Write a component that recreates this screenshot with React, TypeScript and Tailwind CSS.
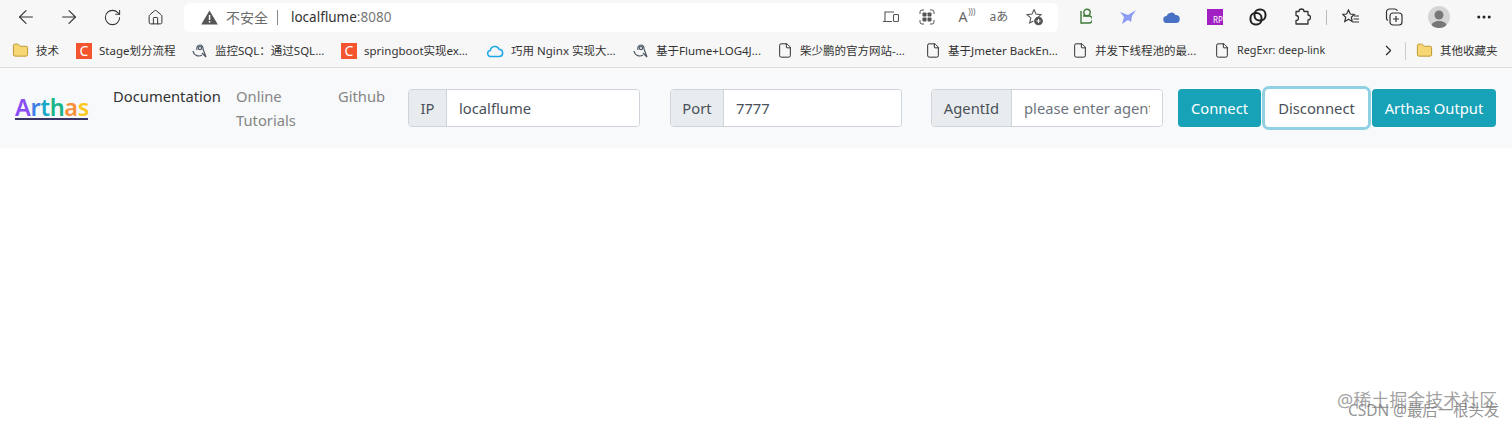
import { ArrowLeft, ArrowRight, ChevronRight, File, Folder, Home, MoreHorizontal, RotateCw } from "lucide-react";
import type { ReactNode } from "react";

const FONT = "font-['Noto_Sans','Open_Sans','Noto_Sans_CJK_SC',sans-serif]";

function Cell({ children, narrow }: { children: ReactNode; narrow?: boolean }) {
  return <div className={`flex h-full shrink-0 items-center justify-center ${narrow ? "w-9" : "w-[43.4px]"}`}>{children}</div>;
}

function CsdnIcon() {
  return (
    <div className="flex h-4 w-4 shrink-0 items-center justify-center bg-[#f4552f] text-[14px] leading-none text-white">C</div>
  );
}

function BirdIcon() {
  return (
    <svg width="16" height="16" viewBox="0 0 16 16" fill="none" stroke="#4b5563" strokeWidth="1.2" className="shrink-0">
      <path d="M1 8c1 5 6 6 9 4" />
      <path d="M5 7c-1-3 1-5 3-5s3 2 3 4l3 8-4-4" />
      <circle cx="8" cy="5" r="1.6" />
    </svg>
  );
}

function CloudIcon() {
  return (
    <svg width="17" height="14" viewBox="0 0 17 14" fill="none" stroke="#1ea7e6" strokeWidth="1.5" className="shrink-0">
      <path d="M4 12.5a3 3 0 0 1-.6-6A4.5 4.5 0 0 1 12 5.2a3.7 3.7 0 0 1 .8 7.3H4z" />
    </svg>
  );
}

function PageIcon() {
  return <File size={17} strokeWidth={1.4} color="#222" className="w-4 shrink-0" />;
}

function FolderIcon() {
  return <Folder size={17} strokeWidth={1.2} fill="#f7d774" color="#b48a1e" className="shrink-0" />;
}

function Bookmark({ icon, label, width, ml, size }: { icon: ReactNode; label: string; width: string; ml: string; size?: string }) {
  return (
    <div className={`flex shrink-0 items-center gap-[7px] ${ml}`}>
      {icon}
      <span className={`truncate text-[#333] ${size ?? "text-[11.5px]"} ${width}`}>{label}</span>
    </div>
  );
}

function InputGroup({ label, labelWidth, value, placeholder, width, ml }: { label: string; labelWidth: string; value?: string; placeholder?: string; width: string; ml: string }) {
  return (
    <div className={`flex h-[38px] shrink-0 overflow-hidden rounded border border-[#ced4da] ${width} ${ml}`}>
      <div className={`flex shrink-0 items-center justify-center border-r border-[#ced4da] bg-[#e9ecef] text-[#495057] ${labelWidth}`}>{label}</div>
      <input
        readOnly
        value={value}
        placeholder={placeholder}
        className="w-full min-w-0 bg-white px-3 text-[#495057] outline-none placeholder:text-[#6c757d]"
      />
    </div>
  );
}

export default function App() {
  return (
    <div className={`relative h-[426px] w-[1512px] overflow-hidden bg-white ${FONT}`}>
      {/* browser toolbar */}
      <div className="flex h-[34px] items-center bg-[#f7f7f7] pl-1">
        <Cell><ArrowLeft size={22} strokeWidth={1.2} color="#333" /></Cell>
        <Cell><ArrowRight size={22} strokeWidth={1.2} color="#333" /></Cell>
        <Cell><RotateCw size={19} strokeWidth={1.3} color="#333" /></Cell>
        <Cell><Home size={17} strokeWidth={1.4} color="#333" /></Cell>
        <div className="ml-[6.4px] flex h-[29px] w-[874px] shrink-0 items-center rounded-md bg-white pl-[17px] pr-[5px]">
          <svg width="17" height="15" viewBox="0 0 17 15" className="shrink-0">
            <path d="M8.5 0.5 16.8 14.5H0.2z" fill="#555" />
            <rect x="7.8" y="5" width="1.5" height="5" fill="#fff" />
            <rect x="7.8" y="11" width="1.5" height="1.6" fill="#fff" />
          </svg>
          <span className="ml-2 text-[14px] text-[#6b6b6b]">不安全</span>
          <span className="ml-[9px] h-[15px] w-px bg-[#888]" />
          <span className="ml-[13px] text-[13.5px] text-[#333]">localflume<span className="text-[#777]">:8080</span></span>
          <div className="ml-auto flex h-full">
            <Cell narrow>
              <svg width="16" height="14" viewBox="0 0 16 14" fill="none" stroke="#555" strokeWidth="1.1">
                <path d="M2 11V2h9M0 11.5h9" />
                <rect x="10.5" y="4.5" width="5" height="7" rx="1" />
              </svg>
            </Cell>
            <Cell narrow>
              <svg width="16" height="16" viewBox="0 0 16 16" fill="none" stroke="#555" strokeWidth="1">
                <path d="M1 5V3a2 2 0 0 1 2-2h2M11 1h2a2 2 0 0 1 2 2v2M15 11v2a2 2 0 0 1-2 2h-2M5 15H3a2 2 0 0 1-2-2v-2" />
                <rect x="3.5" y="3.5" width="4" height="4" rx="0.8" fill="#555" stroke="none" />
                <rect x="8.5" y="3.5" width="4" height="4" rx="0.8" fill="#555" stroke="none" />
                <rect x="3.5" y="8.5" width="4" height="4" rx="0.8" fill="#555" stroke="none" />
                <rect x="8.5" y="8.5" width="4" height="4" rx="0.8" fill="#555" stroke="none" />
              </svg>
            </Cell>
            <Cell narrow>
              <span className="relative text-[14px] leading-none text-[#666]">A<span className="absolute -right-2 -top-0.5 text-[8px]">)))</span></span>
            </Cell>
            <Cell narrow><span className="text-[12px] text-[#666]">aあ</span></Cell>
            <Cell narrow>
              <svg width="18" height="18" viewBox="0 0 18 18" fill="none" stroke="#555" strokeWidth="1.1">
                <path d="M8 1.5l2 4.6 5 .5-3.7 3.3" />
                <path d="M8 1.5 6 6.1l-5 .5 3.8 3.3-1.1 5 3.6-2" />
                <circle cx="12.5" cy="13" r="3.8" fill="#555" />
                <path d="M12.5 11v4M10.5 13h4" stroke="#fff" />
              </svg>
            </Cell>
          </div>
        </div>
        <div className="ml-[5px] flex h-full items-center">
          <Cell>
            <svg width="14" height="18" viewBox="0 0 14 18" fill="none" stroke="#3e7a3a" strokeWidth="1.4">
              <circle cx="9" cy="4.5" r="3.2" />
              <path d="M3 3v12h8a3 3 0 0 0 0-7H5" />
            </svg>
          </Cell>
          <Cell>
            <svg width="18" height="16" viewBox="0 0 18 16">
              <path d="M17 1 9 6 1 3l4 5-2 7 6-4 3 2 1-6z" fill="#8a9bf0" />
            </svg>
          </Cell>
          <Cell>
            <svg width="17" height="11" viewBox="0 0 17 11">
              <path d="M4 11a3.5 3.5 0 0 1-.5-7A5 5 0 0 1 12.5 3 4 4 0 0 1 13 11z" fill="#4a72c4" />
            </svg>
          </Cell>
          <Cell>
            <div className="flex h-4 w-4 items-end justify-end bg-[#a21fc4] text-[8px] leading-[10px] text-white">RP</div>
          </Cell>
          <Cell>
            <svg width="18" height="18" viewBox="0 0 18 18" fill="none" stroke="#222" strokeWidth="2">
              <rect x="1.5" y="5" width="11" height="11.5" rx="5" />
              <rect x="5.5" y="1.5" width="11" height="11" rx="5" />
            </svg>
          </Cell>
          <Cell>
            <svg width="18" height="18" viewBox="0 0 18 18" fill="none" stroke="#333" strokeWidth="1.3" strokeLinejoin="round">
              <path d="M6 3.5a2.5 2.5 0 0 1 5 0H15v3.5a2.500 2.500 0 0 1 0 5V16H3v-3.500a2.500 2.500 0 0 0 0-5V3.500z" />
            </svg>
          </Cell>
          <div className="ml-[3px] h-[15px] w-px bg-[#bbb]" />
          <div className="ml-[2px] flex h-full">
            <Cell>
              <svg width="18" height="16" viewBox="0 0 18 16" fill="none" stroke="#333" strokeWidth="1.2">
                <path d="M6.500 1 8.300 5l4 .4-3 2.800.9 4.300-3.700-2.200L2.800 12.500l.9-4.300-3-2.800 4-.4z" />
                <path d="M12 7h5M11.500 10h5.500M11 13h6" />
              </svg>
            </Cell>
            <Cell>
              <svg width="18" height="18" viewBox="0 0 18 18" fill="none" stroke="#333" strokeWidth="1.2">
                <rect x="5" y="5" width="12" height="12" rx="3" />
                <path d="M3 12.500A2.500 2.500 0 0 1 1.500 10V4A3 3 0 0 1 4.500 1H10a2.500 2.500 0 0 1 2.300 2M11 8v6M8 11h6" />
              </svg>
            </Cell>
          </div>
          <div className="ml-3 flex h-[22px] w-[22px] shrink-0 items-end justify-center overflow-hidden rounded-full bg-[#d5d5d5]">
            <svg width="18" height="19" viewBox="0 0 18 19" fill="#777">
              <circle cx="9" cy="6" r="4.500" />
              <path d="M1 19c0-5 3-7 8-7s8 2 8 7z" />
            </svg>
          </div>
          <div className="ml-[25px]"><MoreHorizontal size={18} strokeWidth={2} color="#222" /></div>
        </div>
      </div>

      {/* bookmarks */}
      <div className="flex h-[34px] items-center border-b border-[#dcdcdc] bg-[#f7f7f7] pl-3">
        <Bookmark icon={<FolderIcon />} label="技术" width="w-[25px]" ml="" />
        <Bookmark icon={<CsdnIcon />} label="Stage划分流程" width="w-[78px]" ml="ml-[15px]" />
        <Bookmark icon={<BirdIcon />} label="监控SQL：通过SQL..." width="w-[112px]" ml="ml-[15px]" />
        <Bookmark icon={<CsdnIcon />} label="springboot实现exc..." width="w-[108px]" ml="ml-[14px]" />
        <Bookmark icon={<CloudIcon />} label="巧用 Nginx 实现大..." width="w-[106px]" ml="ml-[15px]" />
        <Bookmark icon={<BirdIcon />} label="基于Flume+LOG4J..." width="w-[107px]" ml="ml-[16px]" />
        <Bookmark icon={<PageIcon />} label="柴少鹏的官方网站-..." width="w-[110px]" ml="ml-[14px]" />
        <Bookmark icon={<PageIcon />} label="基于Jmeter BackEn..." width="w-[110px]" ml="ml-[15px]" />
        <Bookmark icon={<PageIcon />} label="并发下线程池的最..." width="w-[106px]" ml="ml-[14px]" />
        <Bookmark icon={<PageIcon />} label="RegExr: deep-link" width="w-[93px]" ml="ml-[13px]" size="text-[10.8px]" />
        <ChevronRight size={17} strokeWidth={1.5} color="#222" className="ml-[50px] shrink-0" />
        <div className="ml-2 h-[18px] w-px shrink-0 bg-[#ccc]" />
        <Bookmark icon={<FolderIcon />} label="其他收藏夹" width="w-[62px]" ml="ml-[10px]" />
      </div>

      {/* page nav */}
      <nav className="flex h-[80px] items-center bg-[#f8f9fa] pl-[15px] text-[14.75px]">
        <div className="w-[73px] shrink-0 border-b-2 border-[#3b3566] text-[23.5px] font-semibold leading-[21px] tracking-[-0.3px]">
          <span className="text-[#8a4df5]">A</span>
          <span className="text-[#3f7fe8]">r</span>
          <span className="text-[#17a7c9]">t</span>
          <span className="text-[#1cb38a]">h</span>
          <span className="text-[#f7903a]">a</span>
          <span className="text-[#fbc91e]">s</span>
        </div>
        <div className="ml-[25px] flex h-[48px] w-[273px] shrink-0 items-start leading-[24px] text-[#858585]">
          <span className="w-[123px] whitespace-nowrap text-[#333]">Documentation</span>
          <span className="w-[102px]">Online<br />Tutorials</span>
          <span>Github</span>
        </div>
        <InputGroup label="IP" labelWidth="w-[38px]" value="localflume" width="w-[232px]" ml="ml-[22px]" />
        <InputGroup label="Port" labelWidth="w-[53px]" value="7777" width="w-[232px]" ml="ml-[30px]" />
        <InputGroup label="AgentId" labelWidth="w-[80px]" placeholder="please enter agent id" width="w-[232px]" ml="ml-[29px]" />
        <button className="ml-[15px] h-[38px] w-[83px] shrink-0 rounded bg-[#17a2b8] text-white">Connect</button>
        <button className="ml-1 h-[38px] w-[103px] shrink-0 rounded bg-white text-[#495057] outline-[3px] outline-[#8fd0e2]">Disconnect</button>
        <button className="ml-1 h-[38px] w-[124px] shrink-0 rounded bg-[#17a2b8] text-white">Arthas Output</button>
      </nav>

      {/* watermarks */}
      <div className="absolute left-[1337px] top-[388px] whitespace-nowrap text-[18px] leading-[24px] text-[#8a8a8a]/80">@稀土掘金技术社区</div>
      <div className="absolute left-[1348px] top-[401px] whitespace-nowrap text-[15.4px] leading-[20px] text-[#777]/80">CSDN @最后一根头发</div>
    </div>
  );
}
